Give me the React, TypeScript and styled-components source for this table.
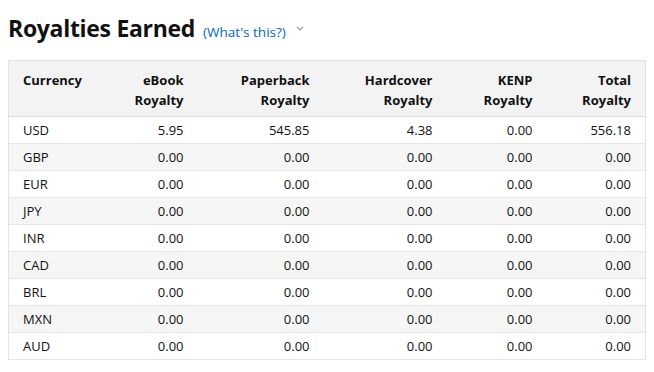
import React from "react";
import styled, { createGlobalStyle } from "styled-components";

const GlobalStyle = createGlobalStyle`
  body {
    margin: 0;
    background: #fff;
    font-family: "Open Sans", "Noto Sans", Arial, sans-serif;
    color: #111;
  }
`;

const rows = [
  ["USD", "5.95", "545.85", "4.38", "0.00", "556.18"],
  ["GBP", "0.00", "0.00", "0.00", "0.00", "0.00"],
  ["EUR", "0.00", "0.00", "0.00", "0.00", "0.00"],
  ["JPY", "0.00", "0.00", "0.00", "0.00", "0.00"],
  ["INR", "0.00", "0.00", "0.00", "0.00", "0.00"],
  ["CAD", "0.00", "0.00", "0.00", "0.00", "0.00"],
  ["BRL", "0.00", "0.00", "0.00", "0.00", "0.00"],
  ["MXN", "0.00", "0.00", "0.00", "0.00", "0.00"],
  ["AUD", "0.00", "0.00", "0.00", "0.00", "0.00"],
];

const headers = [
  ["Currency", ""],
  ["eBook", "Royalty"],
  ["Paperback", "Royalty"],
  ["Hardcover", "Royalty"],
  ["KENP", "Royalty"],
  ["Total", "Royalty"],
];

const widths = [90, 99, 126, 123, 100, 99];

const App = () => {
  return (
    <Page>
      <GlobalStyle />
      <TitleRow>
        <Title>Royalties Earned</Title>
        <HelpLink href="#">(What's this?)</HelpLink>
        <Chevron viewBox="0 0 8 5">
          <path d="M1 1 L4 4 L7 1" fill="none" stroke="#999" strokeWidth="1.1" />
        </Chevron>
      </TitleRow>
      <Table>
        <colgroup>
          {widths.map((w, i) => (
            <col key={i} style={{ width: w }} />
          ))}
        </colgroup>
        <thead>
          <tr>
            {headers.map((h, i) => (
              <HeadCell key={i} $left={i === 0}>
                {h[0]}
                {h[1] && <br />}
                {h[1]}
              </HeadCell>
            ))}
          </tr>
        </thead>
        <tbody>
          {rows.map((r, ri) => (
            <Row key={r[0]} $striped={ri % 2 === 1}>
              {r.map((c, ci) => (
                <Cell key={ci} $left={ci === 0}>
                  {c}
                </Cell>
              ))}
            </Row>
          ))}
        </tbody>
      </Table>
    </Page>
  );
};

const Page = styled.div`
  padding: 8px 8px 0 8px;
`;

const TitleRow = styled.div`
  display: flex;
  align-items: baseline;
  height: 52px;
  padding-top: 4px;
  box-sizing: border-box;
`;

const Title = styled.h1`
  margin: 0;
  font-size: 23px;
  font-weight: 700;
  color: #111;
  letter-spacing: -0.3px;
`;

const HelpLink = styled.a`
  margin-left: 8px;
  font-size: 13.5px;
  color: #0066c0;
  text-decoration: none;
`;

const Chevron = styled.svg`
  width: 8px;
  height: 5px;
  margin-left: 10px;
  margin-top: 14px;
  align-self: flex-start;
`;

const Table = styled.table`
  border-collapse: collapse;
  table-layout: fixed;
  width: 637px;
  border: 1px solid #e3e3e3;
  font-size: 13px;
`;

const HeadCell = styled.th<{ $left?: boolean }>`
  background: #f3f3f3;
  font-weight: 700;
  text-align: ${(p) => (p.$left ? "left" : "right")};
  vertical-align: top;
  padding: 9px 14px 6px 14px;
  line-height: 20px;
  border-bottom: 1px solid #dcdcdc;
  color: #111;
`;

const Row = styled.tr<{ $striped?: boolean }>`
  background: ${(p) => (p.$striped ? "#f6f6f6" : "#fff")};
  border-bottom: 1px solid #e7e7e7;
`;

const Cell = styled.td<{ $left?: boolean }>`
  text-align: ${(p) => (p.$left ? "left" : "right")};
  padding: 4px 14px 3px 14px;
  line-height: 19px;
  color: #111;
`;

export default App;
